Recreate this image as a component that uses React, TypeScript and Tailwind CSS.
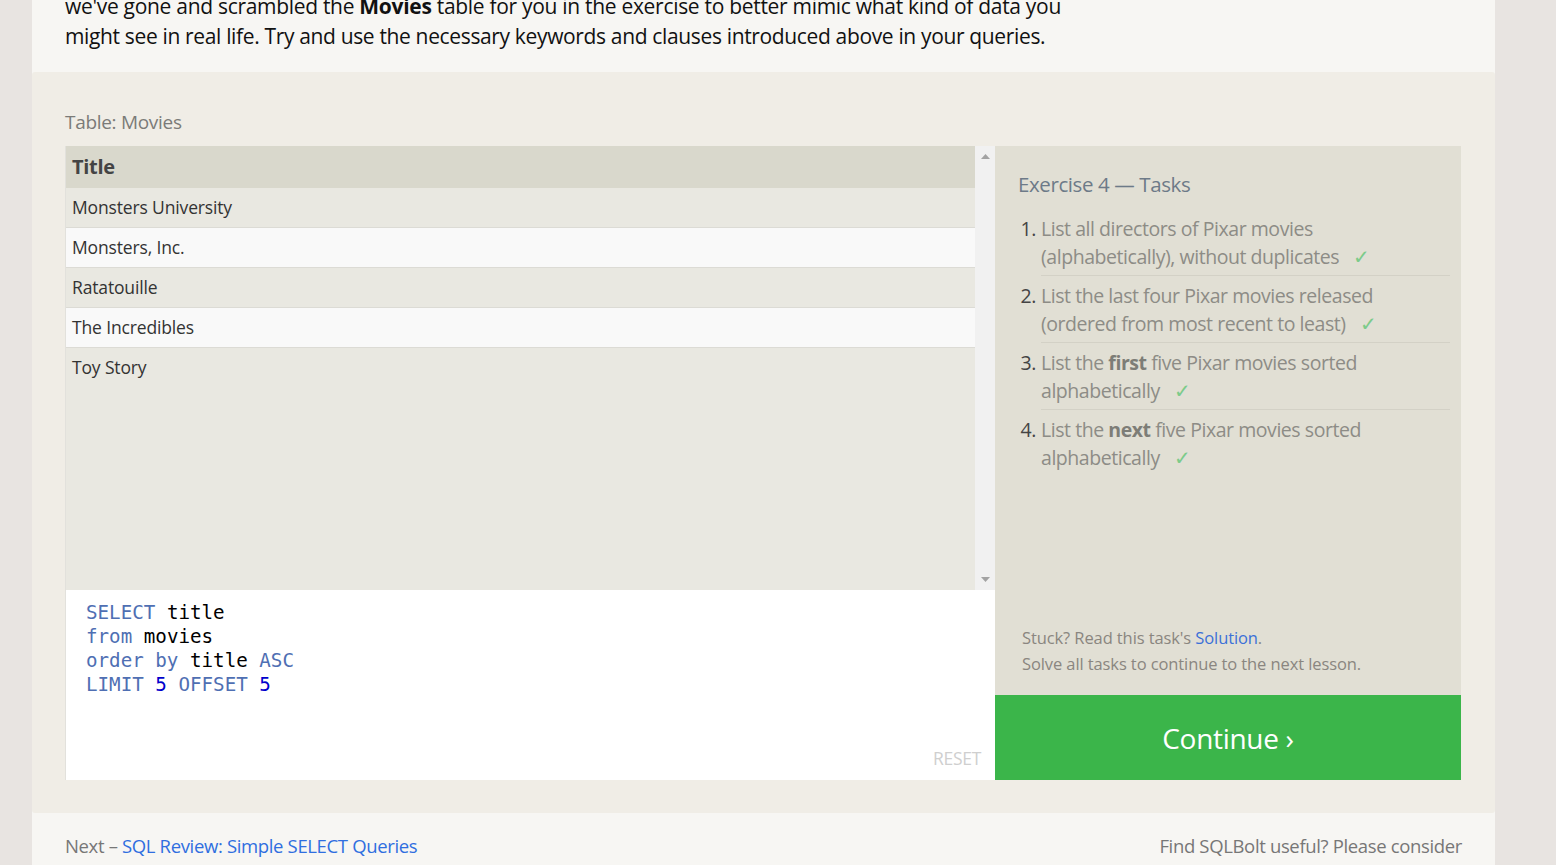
import React from "react";

const Check = () => <span className="ml-[14px] text-[#7ccb8a]">✓</span>;

const tasks: React.ReactNode[] = [
  <>List all directors of Pixar movies<br />(alphabetically), without duplicates<Check /></>,
  <>List the last four Pixar movies released<br />(ordered from most recent to least)<Check /></>,
  <>List the <b className="font-bold text-[#7d7d77]">first</b> five Pixar movies sorted<br />alphabetically<Check /></>,
  <>List the <b className="font-bold text-[#7d7d77]">next</b> five Pixar movies sorted<br />alphabetically<Check /></>,
];

const rows = ["Monsters University", "Monsters, Inc.", "Ratatouille", "The Incredibles", "Toy Story"];

export default function App() {
  return (
    <div className="w-[1556px] h-[865px] overflow-hidden bg-[#e8e4e1] font-['Open_Sans',sans-serif]">
      <div className="ml-[32px] w-[1463px] h-full bg-[#f7f6f3] flex flex-col">
        <p className="mt-[-9px] mb-[1px] px-[33px] text-[21px] leading-[30px] text-[#111] whitespace-nowrap tracking-[-0.3px]">
          we've gone and scrambled the <b className="font-bold">Movies</b> table for you in the exercise to better mimic what kind of data you
          <br />
          <span className="tracking-[-0.35px]">might see in real life. Try and use the necessary keywords and clauses introduced above in your queries.</span>
        </p>
        <div className="mt-[20px] h-[741px] rounded-[3px] bg-[#f0ede6] px-[33px] pt-[36px] flex flex-col">
          <div className="text-[19px] leading-[28px] text-[#7b7b78] h-[38px] tracking-[-0.3px]">Table: Movies</div>
          <div className="flex h-[634px]">
            <div className="w-[930px] flex flex-col">
              <div className="h-[444px] flex">
                <div className="flex-1 bg-[#e9e8e1] flex flex-col border-l border-[#e2e1dc]">
                  <div className="h-[42px] bg-[#d9d8cc] flex items-center pl-[6px] text-[20px] font-bold text-[#444] tracking-[-0.3px]">Title</div>
                  {rows.map((r, i) => (
                    <div
                      key={r}
                      className={`h-[40px] flex items-center pl-[6px] text-[17.5px] text-[#333] tracking-[-0.15px] border-b ${i < rows.length - 1 ? "border-[#dcdbd5]" : "border-transparent"} ${i % 2 === 1 ? "bg-[#f9f9f9]" : "bg-[#e9e8e1]"}`}
                    >
                      {r}
                    </div>
                  ))}
                </div>
                <div className="w-[20px] bg-[#f1f1f1] flex flex-col items-center justify-between py-[8px]">
                  <svg width="9" height="5" viewBox="0 0 9 5"><polygon points="4.5,0 9,5 0,5" fill="#a3a3a3" /></svg>
                  <svg width="9" height="5" viewBox="0 0 9 5"><polygon points="0,0 9,0 4.5,5" fill="#a3a3a3" /></svg>
                </div>
              </div>
              <div className="flex-1 bg-white relative pl-[20px] pt-[11px] font-['DejaVu_Sans_Mono',monospace] text-[19.2px] leading-[24px] border-l border-[#e2e1dc]">
                <div><span className="text-[#4f6fb3]">SELECT</span> <span className="text-black">title</span></div>
                <div><span className="text-[#4f6fb3]">from</span> <span className="text-black">movies</span></div>
                <div><span className="text-[#4f6fb3]">order by</span> <span className="text-black">title</span> <span className="text-[#4f6fb3]">ASC</span></div>
                <div><span className="text-[#4f6fb3]">LIMIT</span> <span className="text-[#0000cc]">5</span> <span className="text-[#4f6fb3]">OFFSET</span> <span className="text-[#0000cc]">5</span></div>
                <div className="absolute right-[14px] bottom-[10px] font-['Open_Sans',sans-serif] text-[17.5px] text-[#cfcfcf] tracking-[-0.3px]">RESET</div>
              </div>
            </div>
            <div className="w-[466px] flex flex-col">
              <div className="flex-1 bg-[#e1dfd4] pl-[23px] pr-[11px] pt-[24px] flex flex-col">
                <div className="text-[20.5px] leading-[28px] text-[#6d7a88] tracking-[-0.4px]">Exercise 4 — Tasks</div>
                <ol className="mt-[17px] text-[19.5px] leading-[28px] text-[#8d8c86] tracking-[-0.45px]">
                  {tasks.map((t, i) => (
                    <li key={i} className={`flex ${i > 0 ? "pt-[6px]" : ""}`}>
                      <span className="w-[18px] text-right mr-[5px] text-[#444]">{i + 1}.</span>
                      <div className={`flex-1 pb-[4px] ${i < 3 ? "border-b border-[#d3d1c6]" : ""}`}>{t}</div>
                    </li>
                  ))}
                </ol>
                <div className="mt-auto pb-[18px] text-[16.5px] leading-[26px] text-[#8a8680] tracking-[-0.1px] pl-[4px]">
                  Stuck? Read this task's <span className="text-[#3b70d8]">Solution</span>.
                  <br />
                  Solve all tasks to continue to the next lesson.
                </div>
              </div>
              <div className="h-[85px] bg-[#3bb54a] flex items-center justify-center text-white text-[28px] tracking-[-0.3px]">
                Continue ›
              </div>
            </div>
          </div>
        </div>
        <div className="px-[33px] pt-[20px] flex justify-between text-[18.5px] leading-[26px] text-[#777] tracking-[-0.35px]">
          <div>Next – <span className="text-[#2f6ee0]">SQL Review: Simple SELECT Queries</span></div>
          <div>Find SQLBolt useful? Please consider</div>
        </div>
      </div>
    </div>
  );
}
